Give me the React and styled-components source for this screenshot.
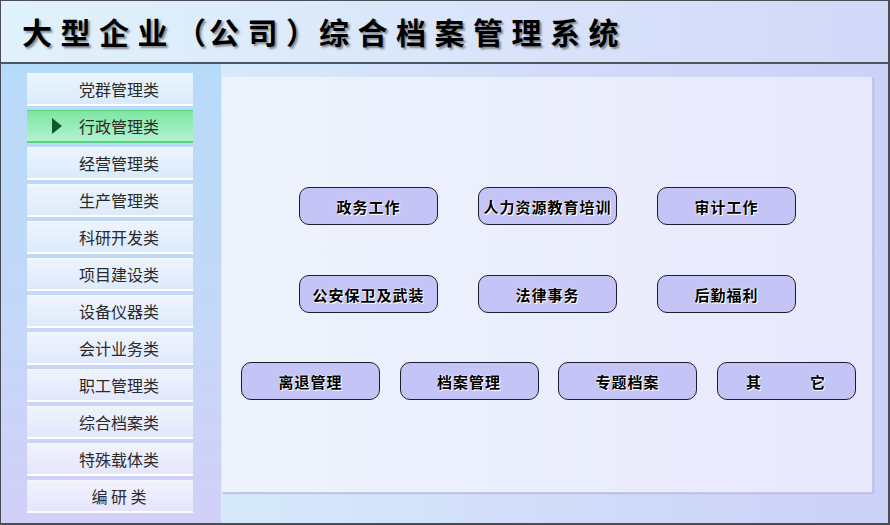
import React from 'react';
import styled, { createGlobalStyle } from 'styled-components';

const GlobalStyle = createGlobalStyle`
  html, body {
    margin: 0;
    padding: 0;
    background: #ffffff;
    overflow: hidden;
  }
  * {
    box-sizing: border-box;
  }
`;

const StyledFrame = styled.div`
  width: 890px;
  height: 525px;
  display: flex;
  flex-direction: column;
  border-top: 1px solid #4a4d56;
  border-left: 1px solid #4a4d56;
  border-right: 2px solid #4a4d56;
  border-bottom: 2px solid #4a4d56;
  font-family: 'Noto Sans CJK SC', 'Noto Sans', sans-serif;
`;

const StyledHeader = styled.header`
  height: 63px;
  flex: none;
  display: flex;
  align-items: center;
  padding: 0 0 2px 21px;
  background: linear-gradient(to right, #e0f2fc 0%, #dae6fa 50%, #d2d8f8 100%);
  border-bottom: 2px solid #50545e;
`;

const StyledTitle = styled.h1`
  margin: 0;
  font-size: 30px;
  font-weight: 700;
  letter-spacing: 8.5px;
  color: #000;
  text-shadow: 2px 2px 2px rgba(60, 60, 60, 0.55);
  line-height: 1;
`;

const StyledParen = styled.span`
  letter-spacing: 3px;
`;

const StyledBody = styled.div`
  flex: 1;
  display: flex;
  min-height: 0;
`;

const StyledSidebar = styled.nav`
  width: 220px;
  flex: none;
  display: flex;
  flex-direction: column;
  gap: 4px;
  padding: 9px 0 0 26px;
  background: linear-gradient(to bottom, #b6dbf8 0%, #c4d8f8 55%, #d2d0f8 100%);
`;

const StyledNavItem = styled.div`
  position: relative;
  width: 166px;
  height: 33px;
  display: flex;
  align-items: center;
  justify-content: center;
  padding-left: 18px;
  font-size: 16px;
  color: #2a2a2a;
  white-space: pre;
  border-top: 1px solid ${({ $active }) => ($active ? '#52d47c' : 'rgba(255, 255, 255, 0.7)')};
  border-bottom: 2px solid ${({ $active }) => ($active ? '#52d47c' : '#ffffff')};
  background: ${({ $active }) =>
    $active
      ? 'linear-gradient(to bottom, #7fe6a2 0%, #98ecb8 50%, #b2f2d0 100%)'
      : 'linear-gradient(to bottom, rgba(255,255,255,0.72) 0%, rgba(255,255,255,0.45) 100%)'};

  &::before {
    content: '';
    display: ${({ $active }) => ($active ? 'block' : 'none')};
    position: absolute;
    left: 25px;
    top: 7px;
    border-top: 8px solid transparent;
    border-bottom: 8px solid transparent;
    border-left: 10px solid #0c5a2c;
  }
`;

const StyledMain = styled.main`
  flex: 1;
  display: flex;
  padding: 13px 15px 30px 1px;
  background: linear-gradient(to right, #d6eafb 0%, #d2dcf9 50%, #ccd1f8 100%);
`;

const StyledPanel = styled.section`
  flex: 1;
  display: flex;
  flex-direction: column;
  padding-top: 110px;
  background: linear-gradient(to right, #eef3fd 0%, #ebeefc 50%, #e8e8fc 100%);
  border-right: 1px solid #c4c8e6;
  border-bottom: 1px solid #c4c8e6;
  box-shadow: 1px 1px 1px rgba(170, 175, 220, 0.6);
`;

const StyledRow = styled.div`
  display: flex;
  gap: ${({ $gap }) => $gap}px;
  padding-left: ${({ $pad }) => $pad}px;
  margin-bottom: ${({ $after }) => $after}px;
`;

const StyledButton = styled.button`
  width: 139px;
  height: 38px;
  flex: none;
  border: 1px solid #1e1e2a;
  border-radius: 10px;
  background: #c4c4f6;
  font-family: 'Noto Sans CJK SC', sans-serif;
  font-size: 15px;
  font-weight: 700;
  letter-spacing: 1px;
  color: #000;
  white-space: pre;
  text-shadow: 0 0 2px #ffffff, 1px 1px 0 #ffffff;
  cursor: pointer;
  padding: 0;
`;

const navItems = [
  '党群管理类',
  '行政管理类',
  '经营管理类',
  '生产管理类',
  '科研开发类',
  '项目建设类',
  '设备仪器类',
  '会计业务类',
  '职工管理类',
  '综合档案类',
  '特殊载体类',
  '编 研 类'
];

const rows = [
  { pad: 77, gap: 40, after: 50, items: ['政务工作', '人力资源教育培训', '审计工作'] },
  { pad: 77, gap: 40, after: 49, items: ['公安保卫及武装', '法律事务', '后勤福利'] },
  { pad: 19, gap: 19.5, after: 0, items: ['离退管理', '档案管理', '专题档案', '其　　　它'] }
];

const App = () => (
  <>
    <GlobalStyle />
    <StyledFrame>
      <StyledHeader>
        <StyledTitle>
          大型企业<StyledParen>（</StyledParen>公司<StyledParen>）</StyledParen>综合档案管理系统
        </StyledTitle>
      </StyledHeader>
      <StyledBody>
        <StyledSidebar>
          {navItems.map((item) => (
            <StyledNavItem key={item} $active={item === '行政管理类'}>
              {item}
            </StyledNavItem>
          ))}
        </StyledSidebar>
        <StyledMain>
          <StyledPanel>
            {rows.map((row) => (
              <StyledRow key={row.items[0]} $pad={row.pad} $gap={row.gap} $after={row.after}>
                {row.items.map((label) => (
                  <StyledButton key={label} type="button">
                    {label}
                  </StyledButton>
                ))}
              </StyledRow>
            ))}
          </StyledPanel>
        </StyledMain>
      </StyledBody>
    </StyledFrame>
  </>
);

export default App;
